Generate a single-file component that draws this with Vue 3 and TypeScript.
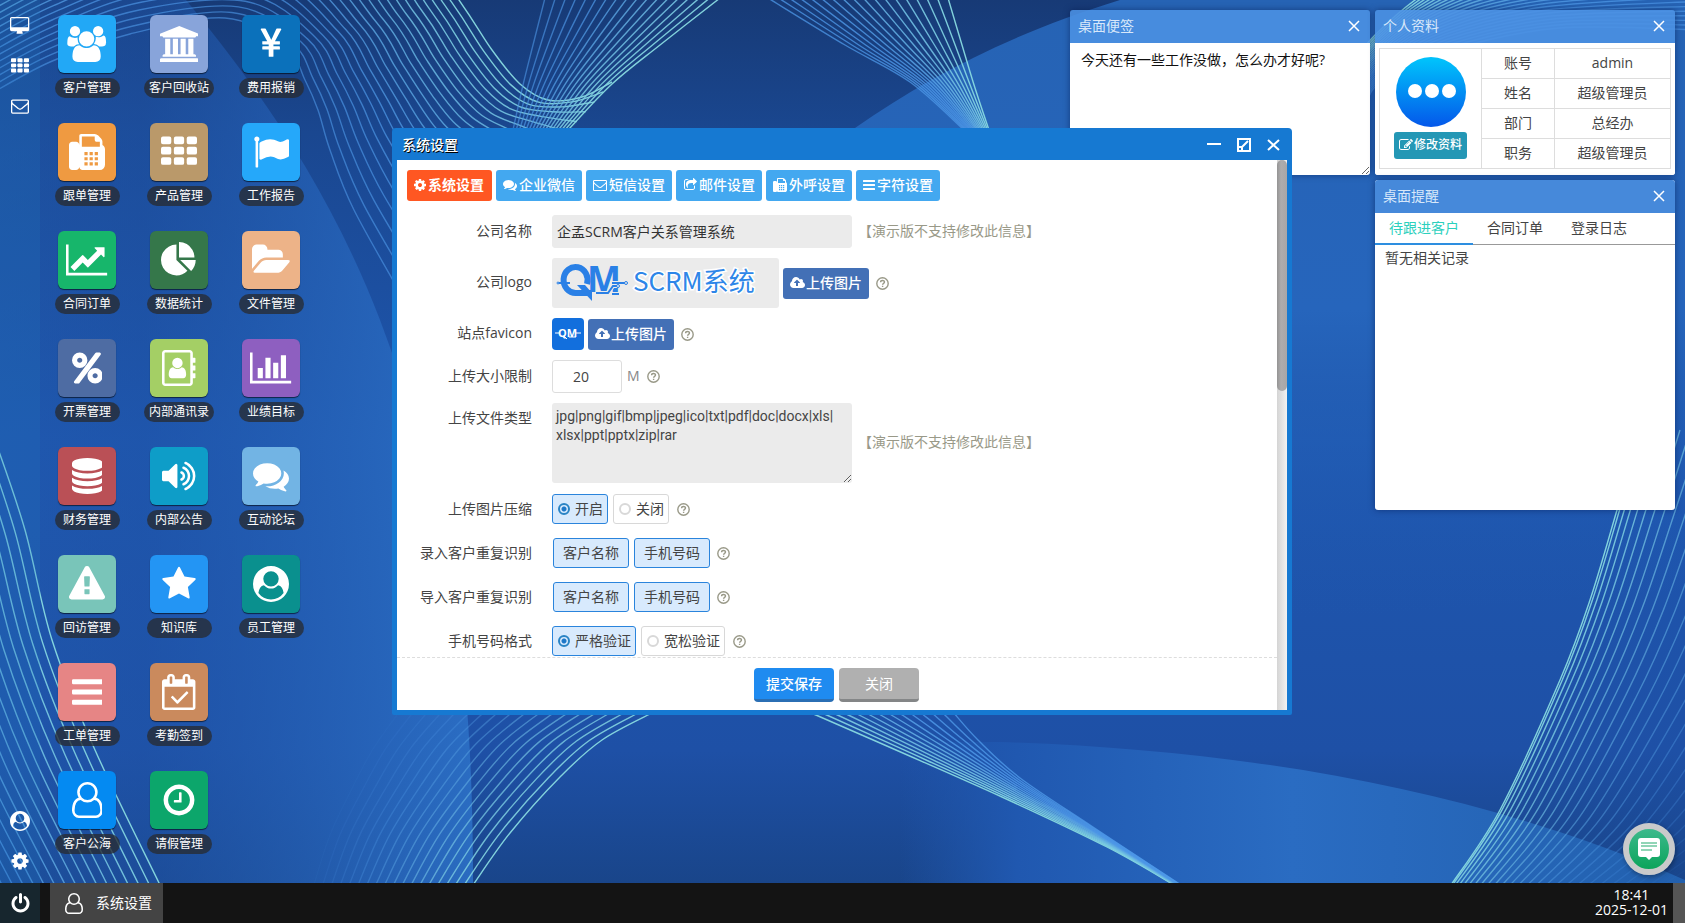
<script setup lang="ts">
import { ref } from 'vue'

type Pt = [number, number]
interface Glyph { w: number; d: string }
interface Line { d: string; stroke: string; opacity: number }

const faxKeys: string = [768, 1024, 1280]
  .flatMap((x) => [896, 1152, 1408].map((y) => `M${x} ${y}h160v160h-160z`))
  .join('')

const thCells: string = [0, 640, 1280]
  .flatMap((x) => [128, 640, 1152].map((y) =>
    `M${x + 96} ${y}h320q96 0 96 96v192q0 96-96 96h-320q-96 0-96-96v-192q0-96 96-96z`))
  .join('')

const glyphs: Record<string, Glyph> = {
  users: { w: 2048, d: 'M657 896q-162 5-265 128h-134q-82 0-138-40.5t-56-118.5q0-353 124-353 6 0 43.5 21t97.5 42.5 119 21.5q67 0 133-23-5 37-5 66 0 159 93 290zm1071 637q0 120-73 189.5t-194 69.5h-874q-121 0-194-69.5t-73-189.5q0-53 3.5-103.5t14-109 26.5-108.5 43-97.5 62-81 85.5-53.5 111.5-20q10 0 43 21.5t73 48 107 48 135 21.5 135-21.5 107-48 73-48 43-21.5q61 0 111.5 20t85.5 53.5 62 81 43 97.5 26.5 108.5 14 109 3.5 103.5zm-1024-1277q0 106-75 181t-181 75-181-75-75-181 75-181 181-75 181 75 75 181zm704 384q0 159-112.5 271.5t-271.5 112.5-271.5-112.5-112.5-271.5 112.5-271.5 271.5-112.5 271.5 112.5 112.5 271.5zm576 225q0 78-56 118.5t-138 40.5h-134q-103-123-265-128 93-131 93-290 0-29-5-66 66 23 133 23 59 0 119-21.5t97.5-42.5 43.5-21q124 0 124 353zm-128-609q0 106-75 181t-181 75-181-75-75-181 75-181 181-75 181 75 75 181z' },
  bank: { w: 1920, d: 'M960 0l960 384v128h-128q0 26-20.5 45t-48.5 19h-1526q-28 0-48.5-19t-20.5-45h-128v-128zm-704 640h256v768h128v-768h256v768h128v-768h256v768h128v-768h256v768h59q28 0 48.5 19t20.5 45v64h-1664v-64q0-26 20.5-45t48.5-19h59v-768zm1595 960q28 0 48.5 19t20.5 45v128h-1920v-128q0-26 20.5-45t48.5-19h1782z' },
  yen: { w: 1792, d: 'M985.5 1536h-172q-13 0-22.5-9t-9.5-23v-330h-288q-13 0-22.5-9t-9.5-23v-103q0-13 9.5-22.5t22.5-9.5h288v-85h-288q-13 0-22.5-9t-9.5-23v-104q0-13 9.5-22.5t22.5-9.5h214l-321-578q-8-16 0-32 10-16 28-16h194q19 0 29 18l215 425q19 38 56 125 10-24 30.5-68t27.5-61l191-420q8-19 29-19h191q17 0 27 16 9 14 1 31l-313 579h215q13 0 22.5 9.5t9.5 22.5v104q0 14-9.5 23t-22.5 9h-290v85h290q13 0 22.5 9.5t9.5 22.5v103q0 14-9.5 23t-22.5 9h-290v330q0 13-9.5 22.5t-22.5 9.5z' },
  fax: { w: 1792, d: 'M352 384q66 0 113 47t47 113v1088q0 66-47 113t-113 47h-192q-66 0-113-47t-47-113v-1088q0-66 47-113t113-47h192zM1664 547q58 34 93 93t35 128v768q0 106-75 181t-181 75h-864q-66 0-113-47t-47-113v-1536q0-40 28-68t68-28h672q40 0 88 20t76 48l152 152q28 28 48 76t20 88zM1536 640v-256h-160q-40 0-68-28t-28-68v-160h-640v512z' + faxKeys },
  th: { w: 1792, d: thCells },
  flag: { w: 1792, d: 'M320 256q0 72-64 110v1266q0 13-9.5 22.5t-22.5 9.5h-64q-13 0-22.5-9.5t-9.5-22.5v-1266q-64-38-64-110 0-53 37.5-90.5t90.5-37.5 90.5 37.5 37.5 90.5zm1472 64v763q0 25-12.5 38.5t-39.5 27.5q-215 116-369 116-61 0-123.5-22t-108.5-48-115.5-48-142.5-22q-192 0-464 146-17 9-33 9-26 0-45-19t-19-45v-742q0-32 31-55 21-14 79-43 236-120 421-120 107 0 200 29t219 88q38 19 88 19 54 0 117.5-21t110-47 88-47 54.5-21q26 0 45 19t19 45z' },
  line: { w: 2048, d: 'M2048 1536v128h-2048v-1536h128v1408h1920zm-128-1248v435q0 21-19.5 29.5t-35.5-7.5l-121-121-633 633q-10 10-23 10t-23-10l-233-233-416 416-192-192 585-585q10-10 23-10t23 10l233 233 464-464-121-121q-16-16-7.5-35.5t29.5-19.5h435q14 0 23 9t9 23z' },
  pie: { w: 1792, d: 'M768 890l546 546q-106 108-247.5 168t-298.5 60q-209 0-385.5-103t-279.5-279.5-103-385.5 103-385.5 279.5-279.5 385.5-103v762zm187 6h773q0 157-60 298.5t-168 247.5zm709-128h-768v-768q209 0 385.5 103t279.5 279.5 103 385.5z' },
  folder: { w: 1920, d: 'M1879 952q0 31-31 66l-336 396q-43 51-120.5 86.5t-143.5 35.5h-1088q-34 0-60.5-13t-26.5-43q0-31 31-66l336-396q43-51 120.5-86.5t143.5-35.5h1088q34 0 60.5 13t26.5 43zm-343-344v160h-832q-94 0-197 47.5t-164 119.5l-337 396-5 6q0-4-.5-12.5t-.5-12.5v-960q0-92 66-158t158-66h320q92 0 158 66t66 158v32h544q92 0 158 66t66 158z' },
  percent: { w: 1536, d: 'M1280 1280q0-52-38-90t-90-38-90 38-38 90 38 90 90 38 90-38 38-90zM512 512q0-52-38-90t-90-38-90 38-38 90 38 90 90 38 90-38 38-90zM1536 1280q0 159-112.5 271.5t-271.5 112.5-271.5-112.5-112.5-271.5 112.5-271.5 271.5-112.5 271.5 112.5 112.5 271.5zM1440 192q0 20-13 38l-1056 1408q-19 26-51 26h-160q-26 0-45-19t-19-45q0-20 13-38l1056-1408q19-26 51-26h160q26 0 45 19t19 45zM768 512q0 159-112.5 271.5t-271.5 112.5-271.5-112.5-112.5-271.5 112.5-271.5 271.5-112.5 271.5 112.5 112.5 271.5z' },
  book: { w: 1664, d: 'M1028 644q0 107-76.5 183t-183.5 76-183.5-76-76.5-183 76.5-183 183.5-76 183.5 76 76.5 183zm-48 220q46 0 82.5 17t60 47.5 39.5 67 24 81 11.5 82.5 3.5 79q0 67-39.5 118.5t-105.5 51.5h-576q-66 0-105.5-51.5t-39.5-118.5q0-48 4.5-93.5t18.5-98.5 36.5-91.5 63-64.5 93.5-26h5q7 4 32 19.5t35.5 21 33 17 37 16 35 9 39.5 4.5 39.5-4.5 35-9 37-16 33-17 35.5-21 32-19.5zM1664 608q0 13-9.5 22.5t-22.5 9.5h-96v128h96q13 0 22.5 9.5t9.5 22.5v192q0 13-9.5 22.5t-22.5 9.5h-96v128h96q13 0 22.5 9.5t9.5 22.5v192q0 13-9.5 22.5t-22.5 9.5h-96v224q0 66-47 113t-113 47h-1216q-66 0-113-47t-47-113v-1472q0-66 47-113t113-47h1216q66 0 113 47t47 113v224h96q13 0 22.5 9.5t9.5 22.5v192zM1408 1632v-1472q0-13-9.5-22.5t-22.5-9.5h-1216q-13 0-22.5 9.5t-9.5 22.5v1472q0 13 9.5 22.5t22.5 9.5h1216q13 0 22.5-9.5t9.5-22.5z' },
  bar: { w: 2048, d: 'M640 896v512h-256v-512h256zm384-512v1024h-256v-1024h256zm1024 1152v128h-2048v-1536h128v1408h1920zm-640-896v768h-256v-768h256zm384-384v1152h-256v-1152h256z' },
  db: { w: 1536, d: 'M768 768q237 0 443-43t325-127v170q0 69-103 128t-280 93.5-385 34.5-385-34.5-280-93.5-103-128v-170q119 84 325 127t443 43zm0 768q237 0 443-43t325-127v170q0 69-103 128t-280 93.5-385 34.5-385-34.5-280-93.5-103-128v-170q119 84 325 127t443 43zm0-384q237 0 443-43t325-127v170q0 69-103 128t-280 93.5-385 34.5-385-34.5-280-93.5-103-128v-170q119 84 325 127t443 43zm0-1152q208 0 385 34.5t280 93.5 103 128v128q0 69-103 128t-280 93.5-385 34.5-385-34.5-280-93.5-103-128v-128q0-69 103-128t280-93.5 385-34.5z' },
  volume: { w: 1664, d: 'M768 352v1088q0 26-19 45t-45 19-45-19l-333-333h-262q-26 0-45-19t-19-45v-384q0-26 19-45t45-19h262l333-333q19-19 45-19t45 19 19 45zm384 544q0 76-42.5 141.5t-112.5 93.5q-10 5-25 5-26 0-45-18.5t-19-45.5q0-21 12-35.5t29-25 34-23 29-36 12-56.5-12-56.5-29-36-34-23-29-25-12-35.5q0-27 19-45.5t45-18.5q15 0 25 5 70 27 112.5 93t42.5 142zm256 0q0 153-85 282.5t-225 188.5q-13 5-25 5-27 0-46-19t-19-45q0-39 39-59 56-29 76-44 74-54 115.5-135.5t41.5-173.5-41.5-173.5-115.5-135.5q-20-15-76-44-39-20-39-59 0-26 19-45t45-19q13 0 26 5 140 59 225 188.5t85 282.5zm256 0q0 230-127 422.5t-338 283.5q-13 5-26 5-26 0-45-19t-19-45q0-36 39-59 7-4 22.5-10.5t22.5-10.5q46-25 82-51 123-91 192-227t69-289-69-289-192-227q-36-26-82-51-7-4-22.5-10.5t-22.5-10.5q-39-23-39-59 0-26 19-45t45-19q13 0 26 5 211 91 338 283.5t127 422.5z' },
  comments: { w: 1792, d: 'M1408 768q0 139-94 257t-256.5 186.5-353.5 68.5q-86 0-176-16-124 88-278 128-36 9-86 16h-3q-11 0-20.5-8t-11.5-21q-1-3-1-6.5t.5-6.5 2-6l2.5-5 3.5-5.5 4-5 4.5-5 4-4.5q5-6 23-25t26-29.5 22.5-29 25-38.5 20.5-44q-124-72-195-177t-71-224q0-139 94-257t256.5-186.5 353.5-68.5 353.5 68.5 256.5 186.5 94 257zm384 256q0 120-71 224.5t-195 176.5q10 24 20.5 44t25 38.5 22.5 29 26 29.5 23 25q1 1 4 4.5t4.5 5 4 5 3.5 5.5l2.5 5 2 6 .5 6.5-1 6.5q-3 14-13 22t-22 7q-50-7-86-16-154-40-278-128-90 16-176 16-271 0-472-132 58 4 88 4 161 0 309-45t264-129q125-92 192-212t67-254q0-77-23-152 129 71 204 178t75 230z' },
  warning: { w: 1792, d: 'M1024 1375v-190q0-14-9.5-23.5t-22.5-9.5h-192q-13 0-22.5 9.5t-9.5 23.5v190q0 14 9.5 23.5t22.5 9.5h192q13 0 22.5-9.5t9.5-23.5zm-2-374l18-459q0-12-10-19-13-11-24-11h-220q-11 0-24 11-10 7-10 21l17 457q0 10 10 16.5t24 6.5h185q14 0 23.5-6.5t10.5-16.5zm-14-934l768 1408q35 63-2 126-17 29-46.5 46t-63.5 17h-1536q-34 0-63.5-17t-46.5-46q-37-63-2-126l768-1408q17-31 47-49t65-18 65 18 47 49z' },
  star: { w: 1792, d: 'M1728 647q0 22-26 48l-363 354 86 500q1 7 1 20 0 21-10.5 35.5t-30.5 14.5q-19 0-40-12l-449-236-449 236q-22 12-40 12-21 0-31.5-14.5t-10.5-35.5q0-6 2-20l86-500-364-354q-25-27-25-48 0-37 56-46l502-73 225-455q19-41 49-41t49 41l225 455 502 73q56 9 56 46z' },
  userCircle: { w: 1792, d: 'M1523 1339q-22-155-87.5-257.5t-184.5-118.5q-67 74-159.5 115.5t-195.5 41.5-195.5-41.5-159.5-115.5q-119 16-184.5 118.5t-87.5 257.5q106 150 271 237.5t356 87.5 356-87.5 271-237.5zm-243-699q0-159-112.5-271.5t-271.5-112.5-271.5 112.5-112.5 271.5 112.5 271.5 271.5 112.5 271.5-112.5 112.5-271.5zm512 256q0 182-71 347.5t-190.5 286-285.5 191.5-349 71q-182 0-348-71t-286-191-191-286-71-348 71-348 191-286 286-191 348-71 348 71 286 191 191 286 71 348z' },
  bars: { w: 1536, d: 'M64 256h1408q64 0 64 64v128q0 64-64 64h-1408q-64 0-64-64v-128q0-64 64-64zM64 768h1408q64 0 64 64v128q0 64-64 64h-1408q-64 0-64-64v-128q0-64 64-64zM64 1280h1408q64 0 64 64v128q0 64-64 64h-1408q-64 0-64-64v-128q0-64 64-64z' },
  calendar: { w: 1664, d: 'M1303 964l-512 512q-10 9-23 9t-23-9l-288-288q-9-10-9-23t9-22l46-46q9-9 22-9t23 9l220 220 444-444q10-9 23-9t22 9l46 46q9 9 9 22t-9 23zm-1175 700h1408v-1024h-1408v1024zm384-1216v-288q0-14-9-23t-23-9h-64q-14 0-23 9t-9 23v288q0 14 9 23t23 9h64q14 0 23-9t9-23zm768 0v-288q0-14-9-23t-23-9h-64q-14 0-23 9t-9 23v288q0 14 9 23t23 9h64q14 0 23-9t9-23zm384-64v1280q0 52-38 90t-90 38h-1408q-52 0-90-38t-38-90v-1280q0-52 38-90t90-38h128v-96q0-66 47-113t113-47h64q66 0 113 47t47 113v96h384v-96q0-66 47-113t113-47h64q66 0 113 47t47 113v96h128q52 0 90 38t38 90z' },
  user: { w: 1536, d: 'M1201 784q47 14 89.5 38t89 73 79.5 115.5 55 172 22 236.5q0 154-100 263.5t-241 109.5h-854q-141 0-241-109.5t-100-263.5q0-131 22-236.5t55-172 79.5-115.5 89-73 89.5-38q-79-125-79-272 0-104 40.5-198.5t109.5-163.5 163.5-109.5 198.5-40.5 198.5 40.5 163.5 109.5 109.5 163.5 40.5 198.5q0 147-79 272zm-433-656q-159 0-271.5 112.5t-112.5 271.5 112.5 271.5 271.5 112.5 271.5-112.5 112.5-271.5-112.5-271.5-271.5-112.5zm427 1536q88 0 150.5-71.5t62.5-173.5q0-239-78.5-377t-225.5-145q-145 127-336 127t-336-127q-147 7-225.5 145t-78.5 377q0 102 62.5 173.5t150.5 71.5h854z' },
  clock: { w: 1792, d: 'M1024 544v448q0 14-9 23t-23 9h-320q-14 0-23-9t-9-23v-64q0-14 9-23t23-9h224v-352q0-14 9-23t23-9h64q14 0 23 9t9 23zm416 352q0-148-73-273t-198-198-273-73-273 73-198 198-73 273 73 273 198 198 273 73 273-73 198-198 73-273zm224 0q0 209-103 385.5t-279.5 279.5-385.5 103-385.5-103-279.5-279.5-103-385.5 103-385.5 279.5-279.5 385.5-103 385.5 103 279.5 279.5 103 385.5z' },
  cog: { w: 1792, d: 'M1152 896q0-106-75-181t-181-75-181 75-75 181 75 181 181 75 181-75 75-181zm512-109v222q0 12-8 23t-20 13l-185 28q-19 54-39 91 35 50 107 138 10 12 10 25t-9 23q-27 37-99 108t-94 71q-12 0-26-9l-138-108q-44 23-91 38-16 136-29 186-7 28-36 28h-222q-14 0-24.5-8.5t-11.5-21.5l-28-184q-49-16-90-37l-141 107q-10 9-25 9-14 0-25-11-126-114-165-168-7-10-7-23 0-12 8-23 15-21 51-66.5t54-70.5q-27-50-41-99l-183-27q-13-2-21-12.5t-8-23.5v-222q0-12 8-23t19-13l186-28q14-46 39-92-40-57-107-138-10-12-10-24 0-10 9-23 26-36 98.5-107.5t94.5-71.5q13 0 26 10l138 107q44-23 91-38 16-136 29-186 7-28 36-28h222q14 0 24.5 8.5t11.5 21.5l28 184q49 16 90 37l142-107q9-9 24-9 13 0 25 10 129 119 165 170 7 8 7 22 0 12-8 23-15 21-51 66.5t-54 70.5q26 50 41 98l183 28q13 2 21 12.5t8 23.5z' },
  power: { w: 1792, d: 'M1664 896q0 156-61 298t-164 245-245 164-298 61-298-61-245-164-164-245-61-298q0-182 80.5-343t226.5-270q43-32 95.5-25t83.5 50q32 42 24.5 94.5t-49.5 84.5q-98 74-151.5 181t-53.5 228q0 104 40.5 198.5t109.5 163.5 163.5 109.5 198.5 40.5 198.5-40.5 163.5-109.5 109.5-163.5 40.5-198.5q0-121-53.5-228t-151.5-181q-42-32-49.5-84.5t24.5-94.5q31-43 84-50t95 25q146 109 226.5 270t80.5 343zm-640-768v640q0 52-38 90t-90 38-90-38-38-90v-640q0-52 38-90t90-38 90 38 38 90z' },
  mail: { w: 1792, d: 'M1664 1504v-768q-32 36-69 66-268 206-426 338-51 43-83 67t-86.5 48.5-102.5 24.5h-2q-48 0-102.5-24.5t-86.5-48.5-83-67q-158-132-426-338-37-30-69-66v768q0 13 9.5 22.5t22.5 9.5h1472q13 0 22.5-9.5t9.5-22.5zm0-1051v-24.5l-.5-13-3-12.5-5.5-9-9-7.5-14-2.5h-1472q-13 0-22.5 9.5t-9.5 22.5q0 168 147 284 193 152 401 317 6 5 35 29.5t46 37.5 44.5 31.5 50.5 27.5 43 9h2q20 0 43-9t50.5-27.5 44.5-31.5 46-37.5 35-29.5q208-165 401-317 54-43 100.5-115.5t46.5-131.5zm128-37v1088q0 66-47 113t-113 47h-1472q-66 0-113-47t-47-113v-1088q0-66 47-113t113-47h1472q66 0 113 47t47 113z' },
  desktop: { w: 1920, d: 'M1792 992v-832q0-13-9.5-22.5t-22.5-9.5h-1600q-13 0-22.5 9.5t-9.5 22.5v832q0 13 9.5 22.5t22.5 9.5h1600q13 0 22.5-9.5t9.5-22.5zm128-832v1088q0 66-47 113t-113 47h-544q0 37 16 77.5t32 71 16 43.5q0 26-19 45t-45 19h-512q-26 0-45-19t-19-45q0-14 16-44t32-70 16-78h-544q-66 0-113-47t-47-113v-1088q0-66 47-113t113-47h1600q66 0 113 47t47 113z' },
  share: { w: 1792, d: 'M1536 989v259q0 119-84.5 203.5t-203.5 84.5h-832q-119 0-203.5-84.5t-84.5-203.5v-832q0-119 84.5-203.5t203.5-84.5h255q13 0 22.5 9.5t9.5 22.5q0 27-26 32-77 26-133 60-10 4-16 4h-112q-66 0-113 47t-47 113v832q0 66 47 113t113 47h832q66 0 113-47t47-113v-214q0-19 18-29 28-13 54-37 16-16 35-8 21 9 21 29zm237-496l-384 384q-18 19-45 19-12 0-25-5-39-17-39-59v-192h-160q-323 0-438 131-119 137-74 473 3 23-20 34-8 2-12 2-16 0-26-13-10-14-21-31t-39.5-68.5-49.5-99.5-38.5-114-17.5-122q0-49 3.5-91t14-90 28-88 47-81.5 68.5-74 94.5-61.5 124.5-48.5 159.5-30.5 196.5-11h160v-192q0-42 39-59 13-5 25-5 26 0 45 19l384 384q19 19 19 45t-19 45z' },
  upload: { w: 1920, d: 'M1280 864q0-14-9-23l-352-352q-9-9-23-9t-23 9l-351 351q-10 12-10 24 0 14 9 23t23 9h224v352q0 13 9.5 22.5t22.5 9.5h192q13 0 22.5-9.5t9.5-22.5v-352h224q13 0 22.5-9.5t9.5-22.5zm640 288q0 159-112.5 271.5t-271.5 112.5h-1088q-185 0-316.5-131.5t-131.5-316.5q0-130 70-240t188-165q-2-30-2-43 0-212 150-362t362-150q156 0 285.5 87t188.5 231q71-62 166-62 106 0 181 75t75 181q0 76-41 138 130 31 213.5 135.5t83.5 238.5z' },
  edit: { w: 1792, d: 'M888 1184l116-116-152-152-116 116v56h96v96h56zm440-720q-16-16-33 1l-350 350q-17 17-1 33t33-1l350-350q17-17 1-33zm80 594v190q0 119-84.5 203.5t-203.5 84.5h-832q-119 0-203.5-84.5t-84.5-203.5v-832q0-119 84.5-203.5t203.5-84.5h832q63 0 117 25 15 7 18 23 3 17-9 29l-49 49q-14 14-32 8-23-6-45-6h-832q-66 0-113 47t-47 113v832q0 66 47 113t113 47h832q66 0 113-47t47-113v-126q0-13 9-22l64-64q15-15 35-7t20 29zm-96-738l288 288-672 672h-288v-288zm444 132l-92 92-288-288 92-92q28-28 68-28t68 28l152 152q28 28 28 68t-28 68z' },
}

const evenOdd = new Set(['fax', 'book', 'desktop'])

interface App { name: string; icon: string; color: string }
const apps: App[] = [
  { name: '客户管理', icon: 'users', color: '#22a8f6' },
  { name: '跟单管理', icon: 'fax', color: '#ef9a41' },
  { name: '合同订单', icon: 'line', color: '#17b66b' },
  { name: '开票管理', icon: 'percent', color: '#4e6ca3' },
  { name: '财务管理', icon: 'db', color: '#ba5056' },
  { name: '回访管理', icon: 'warning', color: '#79c5b9' },
  { name: '工单管理', icon: 'bars', color: '#e68585' },
  { name: '客户公海', icon: 'user', color: '#048af2' },
  { name: '客户回收站', icon: 'bank', color: '#88a4da' },
  { name: '产品管理', icon: 'th', color: '#ba996a' },
  { name: '数据统计', icon: 'pie', color: '#35774a' },
  { name: '内部通讯录', icon: 'book', color: '#a4cf65' },
  { name: '内部公告', icon: 'volume', color: '#0e9dc8' },
  { name: '知识库', icon: 'star', color: '#2395f4' },
  { name: '考勤签到', icon: 'calendar', color: '#ca8a5d' },
  { name: '请假管理', icon: 'clock', color: '#0ca66b' },
  { name: '费用报销', icon: 'yen', color: '#0b71bb' },
  { name: '工作报告', icon: 'flag', color: '#25a8fa' },
  { name: '文件管理', icon: 'folder', color: '#edb388' },
  { name: '业绩目标', icon: 'bar', color: '#8e5fc0' },
  { name: '互动论坛', icon: 'comments', color: '#72b4e4' },
  { name: '员工管理', icon: 'userCircle', color: '#0a908e' },
]

const tabs = [
  { name: '系统设置', icon: 'cog' },
  { name: '企业微信', icon: 'comments' },
  { name: '短信设置', icon: 'mail' },
  { name: '邮件设置', icon: 'share' },
  { name: '外呼设置', icon: 'fax' },
  { name: '字符设置', icon: 'bars' },
]
const activeTab = ref('系统设置')

const profile = [
  ['账号', 'admin'],
  ['姓名', '超级管理员'],
  ['部门', '总经办'],
  ['职务', '超级管理员'],
]
const reminders = ['待跟进客户', '合同订单', '登录日志']
const activeReminder = ref('待跟进客户')

const company = ref('企孟SCRM客户关系管理系统')
const maxSize = ref('20')
const fileTypes = ref('jpg|png|gif|bmp|jpeg|ico|txt|pdf|doc|docx|xls|xlsx|ppt|pptx|zip|rar')
const compress = ref('开启')
const phoneFormat = ref('严格验证')
const inputCheck = ref(['客户名称', '手机号码'])
const importCheck = ref(['客户名称', '手机号码'])
const memo = ref('今天还有一些工作没做，怎么办才好呢?')

function smooth(p: Pt[]): string {
  let d = `M${p[0][0]} ${p[0][1]}`
  for (let i = 0; i < p.length - 1; i++) {
    const a = p[Math.max(i - 1, 0)]
    const b = p[i]
    const c = p[i + 1]
    const e = p[Math.min(i + 2, p.length - 1)]
    d += `C${b[0] + (c[0] - a[0]) / 6} ${b[1] + (c[1] - a[1]) / 6} ${c[0] - (e[0] - b[0]) / 6} ${c[1] - (e[1] - b[1]) / 6} ${c[0]} ${c[1]}`
  }
  return d
}

/* Blends one curve into another: the teal edge first, the blue edge last. */
function ribbon(teal: Pt[], blue: Pt[], count: number, fade = 0.6, ease = 1): Line[] {
  return Array.from({ length: count }, (_, i) => {
    const k = i / (count - 1)
    const t = Math.pow(k, ease)
    const pts = teal.map((p, j): Pt => [p[0] + (blue[j][0] - p[0]) * t, p[1] + (blue[j][1] - p[1]) * t])
    const mix = (a: number, b: number) => Math.round(a + (b - a) * Math.min(1, k * 1.4))
    return { d: smooth(pts), stroke: `rgb(${mix(136, 78)},${mix(218, 152)},${mix(224, 232)})`, opacity: 0.95 + (fade - 0.95) * k }
  })
}

const lines: Line[] = [
  ...ribbon(
    [[-20, -60], [60, -100], [200, -150], [380, -110], [459, 0], [492, 50], [520, 84], [548, 100], [582, 97], [612, 82]],
    [[-20, 100], [50, 62], [130, 34], [225, 18], [285, 45], [305, 80], [318, 110], [330, 150], [354, 210], [410, 310]], 24),
  ...ribbon([[720, -2], [660, 45], [612, 84], [568, 130]], [[545, -2], [533, 45], [523, 85], [513, 130]], 18),
  ...ribbon([[948, -2], [962, 45], [975, 88], [989, 130]], [[768, -2], [845, 45], [910, 82], [964, 130]], 18, 0.75),
  ...ribbon(
    [[1300, 140], [1340, 80], [1375, 35], [1430, -10], [1500, -40], [1700, -80]],
    [[1360, 140], [1366, 104], [1384, 80], [1450, 50], [1560, 28], [1700, 30]], 24),
  ...ribbon(
    [[-5, 440], [25, 530], [52, 640], [95, 750], [160, 885]],
    [[-180, 500], [-160, 580], [-130, 680], [-95, 780], [-40, 885]], 20),
  ...ribbon(
    [[654, 712], [602, 740], [560, 777], [510, 833], [473, 885]],
    [[385, 712], [360, 750], [340, 790], [320, 835], [305, 885]], 20, 0),
  ...ribbon(
    [[809, 712], [896, 750], [1002, 797], [1107, 847], [1174, 885]],
    [[953, 712], [978, 740], [1020, 778], [1093, 827], [1181, 885]], 14, 0.8),
  ...ribbon(
    [[1640, 430], [1617, 510], [1590, 600], [1560, 680], [1500, 810], [1451, 885]],
    [[1980, 430], [1930, 540], [1880, 640], [1820, 740], [1740, 830], [1640, 900]], 26, 0.05, 1.5),
]
</script>

<template>
  <div class="screen">
    <main class="desktop">
      <svg class="wallpaper" viewBox="0 0 1685 883" preserveAspectRatio="none" aria-hidden="true">
        <defs>
          <linearGradient id="sky" x1="0" y1="0" x2="0" y2="1">
            <stop offset="0" stop-color="#173a76" />
            <stop offset="0.15" stop-color="#1a4790" />
            <stop offset="0.5" stop-color="#1e57b0" />
            <stop offset="0.85" stop-color="#1e50a6" />
            <stop offset="1" stop-color="#19458a" />
          </linearGradient>
          <linearGradient id="leftLight" x1="0" y1="0" x2="1" y2="0">
            <stop offset="0" stop-color="#2058ac" stop-opacity="0.5" />
            <stop offset="0.3" stop-color="#1f54a8" stop-opacity="0.5" />
            <stop offset="1" stop-color="#2c70c6" stop-opacity="0.9" />
          </linearGradient>
          <linearGradient id="rightLight" x1="0" y1="0" x2="0" y2="1">
            <stop offset="0" stop-color="#2663b4" />
            <stop offset="0.5" stop-color="#2665bc" />
            <stop offset="1" stop-color="#1f57ae" stop-opacity="0" />
          </linearGradient>
          <linearGradient id="hill" x1="0" y1="0" x2="1" y2="0">
            <stop offset="0" stop-color="#2058b0" stop-opacity="0" />
            <stop offset="0.15" stop-color="#2058b0" />
            <stop offset="0.5" stop-color="#2a6cc2" />
            <stop offset="1" stop-color="#2260ae" />
          </linearGradient>
        </defs>
        <rect width="1685" height="883" fill="url(#sky)" />
        <path d="M0 0H186C260 90 330 190 380 320C440 480 473 620 473 883H0z" fill="url(#leftLight)" />
        <path d="M1120 0C1010 34 930 76 855 128L700 420H1290V620L1685 590V0z" fill="url(#rightLight)" />
        <path d="M1000 742C1250 750 1480 790 1685 880V883H900L900 742z" fill="url(#hill)" />
        <path v-for="(l, i) in lines" :key="i" :d="l.d" fill="none" :stroke="l.stroke" stroke-width="1.4" :stroke-opacity="l.opacity" />
      </svg>

      <nav class="rail" aria-label="快捷栏">
        <div class="rail-group">
          <button v-for="n in ['desktop', 'th', 'mail']" :key="n" type="button" :aria-label="n">
            <svg class="g18" :viewBox="`0 0 ${glyphs[n].w} 1792`" :fill-rule="evenOdd.has(n) ? 'evenodd' : 'nonzero'"><path :d="glyphs[n].d" /></svg>
          </button>
        </div>
        <div class="rail-group">
          <button v-for="n in ['userCircle', 'cog']" :key="n" type="button" :aria-label="n">
            <svg class="g20" :viewBox="`0 0 ${glyphs[n].w} 1792`"><path :d="glyphs[n].d" /></svg>
          </button>
        </div>
      </nav>

      <section class="apps" aria-label="应用">
        <button v-for="a in apps" :key="a.name" class="app" type="button">
          <span class="tile" :style="{ backgroundColor: a.color }">
            <svg class="g36" :viewBox="`0 0 ${glyphs[a.icon].w} 1792`" :fill-rule="evenOdd.has(a.icon) ? 'evenodd' : 'nonzero'"><path :d="glyphs[a.icon].d" /></svg>
          </span>
          <span class="app-name">{{ a.name }}</span>
        </button>
      </section>

      <aside class="widgets">
        <section class="widget memo">
          <header><h2>桌面便签</h2><button type="button" aria-label="关闭便签"><svg viewBox="0 0 12 12"><path d="M1 1l10 10M11 1L1 11" /></svg></button></header>
          <textarea v-model="memo" aria-label="便签内容"></textarea>
        </section>
        <div class="stack">
          <section class="widget">
            <header><h2>个人资料</h2><button type="button" aria-label="关闭资料"><svg viewBox="0 0 12 12"><path d="M1 1l10 10M11 1L1 11" /></svg></button></header>
            <table class="profile">
              <tbody>
                <tr v-for="(r, i) in profile" :key="r[0]">
                  <td v-if="i === 0" rowspan="4" class="photo">
                    <svg class="avatar" viewBox="0 0 70 70" role="img" aria-label="头像">
                      <defs><linearGradient id="av" x1="0" y1="0" x2="0" y2="1"><stop offset="0.05" stop-color="#00c0fb" /><stop offset="1" stop-color="#0457ea" /></linearGradient></defs>
                      <circle cx="35" cy="35" r="35" fill="url(#av)" />
                      <g fill="#fff"><circle cx="19" cy="34" r="7" /><circle cx="36" cy="34" r="7" /><circle cx="53" cy="34" r="7" /></g>
                    </svg>
                    <button type="button" class="edit"><svg viewBox="0 0 1792 1792"><path :d="glyphs.edit.d" /></svg>修改资料</button>
                  </td>
                  <th scope="row">{{ r[0] }}</th>
                  <td>{{ r[1] }}</td>
                </tr>
              </tbody>
            </table>
          </section>
          <section class="widget remind">
            <header><h2>桌面提醒</h2><button type="button" aria-label="关闭提醒"><svg viewBox="0 0 12 12"><path d="M1 1l10 10M11 1L1 11" /></svg></button></header>
            <div class="remind-tabs">
              <button v-for="r in reminders" :key="r" type="button" :class="{ on: r === activeReminder }" @click="activeReminder = r">{{ r }}</button>
            </div>
            <p>暂无相关记录</p>
          </section>
        </div>
      </aside>

      <section class="window" aria-label="系统设置">
        <header class="titlebar">
          <h1>系统设置</h1>
          <div class="controls">
            <button type="button" aria-label="最小化"><svg viewBox="0 0 14 14"><path d="M0 6h14" stroke-width="2" /></svg></button>
            <button type="button" aria-label="最大化"><svg viewBox="0 0 14 14"><path d="M1 1h12v12H1zM5 9l6-6M1 9h4v4" stroke-width="2" /></svg></button>
            <button type="button" aria-label="关闭窗口"><svg viewBox="0 0 14 14"><path d="M1 2l11 10M12 2L1 12" stroke-width="2" /></svg></button>
          </div>
        </header>
        <div class="window-body">
          <form class="settings" @submit.prevent>
            <div class="tabs">
              <button v-for="t in tabs" :key="t.name" type="button" :class="{ on: t.name === activeTab }" @click="activeTab = t.name">
                <svg :class="{ narrow: t.icon === 'cog' || t.icon === 'bars' }" :viewBox="t.icon === 'cog' ? '128 0 1536 1792' : `0 0 ${glyphs[t.icon].w} 1792`" :fill-rule="evenOdd.has(t.icon) ? 'evenodd' : 'nonzero'"><path :d="glyphs[t.icon].d" /></svg>{{ t.name }}
              </button>
            </div>

            <div class="row">
              <label class="cap" for="company">公司名称</label>
              <div class="field"><input id="company" v-model="company" class="text wide" type="text" readonly /><span class="note">【演示版不支持修改此信息】</span></div>
            </div>
            <div class="row">
              <span class="cap">公司logo</span>
              <div class="field">
                <span class="logo-box">
                  <svg class="logo" viewBox="0 0 227 50" role="img" aria-label="QM SCRM系统">
                    <path d="M35 26A12 13 0 1 0 24 35h16" fill="none" stroke="#2a80e6" stroke-width="6" />
                    <path d="M25 27h8l7 8v8z" fill="#2a80e6" />
                    <text x="35" y="34" class="logo-m">M</text>
                    <path d="M58 25h15M44 35h12l5-7h4" fill="none" stroke="#ebebeb" stroke-width="4" />
                    <path d="M6 25h12M60 25h13M44 35h12l5-7h4M60 36h7" fill="none" stroke="#2a80e6" stroke-width="2" />
                    <g fill="#ebebeb" stroke="#2a80e6"><circle cx="6" cy="25" r="1" /><circle cx="66" cy="28" r="1.5" /><circle cx="74" cy="25" r="1.5" /></g>
                    <text x="81" y="33" class="logo-text">SCRM系统</text>
                  </svg>
                </span>
                <button type="button" class="upload"><svg viewBox="0 0 1920 1792"><path :d="glyphs.upload.d" /></svg>上传图片</button>
                <svg class="help" viewBox="0 0 13 13"><circle cx="6.5" cy="6.5" r="5.7" /><path d="M4.6 5.2C4.6 3 8.5 3 8.5 5.1C8.5 6.4 6.6 6.3 6.6 7.8M6.6 8.7V10" /></svg>
              </div>
            </div>
            <div class="row">
              <span class="cap">站点favicon</span>
              <div class="field">
                <svg class="favicon" viewBox="0 0 32 32" role="img" aria-label="QM">
                  <rect width="32" height="32" rx="4" fill="#126fdd" />
                  <text x="6" y="19" class="fav-text">QM</text>
                  <path d="M3 15h4M24 15h5M12 18l3 3M17 19h7" stroke="#fff" fill="none" />
                </svg>
                <button type="button" class="upload"><svg viewBox="0 0 1920 1792"><path :d="glyphs.upload.d" /></svg>上传图片</button>
                <svg class="help" viewBox="0 0 13 13"><circle cx="6.5" cy="6.5" r="5.7" /><path d="M4.6 5.2C4.6 3 8.5 3 8.5 5.1C8.5 6.4 6.6 6.3 6.6 7.8M6.6 8.7V10" /></svg>
              </div>
            </div>
            <div class="row">
              <label class="cap" for="size">上传大小限制</label>
              <div class="field">
                <input id="size" v-model="maxSize" class="text size" type="text" /><span class="unit">M</span>
                <svg class="help" viewBox="0 0 13 13"><circle cx="6.5" cy="6.5" r="5.7" /><path d="M4.6 5.2C4.6 3 8.5 3 8.5 5.1C8.5 6.4 6.6 6.3 6.6 7.8M6.6 8.7V10" /></svg>
              </div>
            </div>
            <div class="row top">
              <label class="cap" for="types">上传文件类型</label>
              <div class="field"><textarea id="types" v-model="fileTypes" class="types" readonly></textarea><span class="note">【演示版不支持修改此信息】</span></div>
            </div>
            <div class="choices">
              <div class="row choice">
                <span class="cap">上传图片压缩</span>
                <div class="field">
                  <label v-for="o in ['开启', '关闭']" :key="o" class="radio" :class="{ on: compress === o }"><input v-model="compress" type="radio" name="compress" :value="o" />{{ o }}</label>
                  <svg class="help" viewBox="0 0 13 13"><circle cx="6.5" cy="6.5" r="5.7" /><path d="M4.6 5.2C4.6 3 8.5 3 8.5 5.1C8.5 6.4 6.6 6.3 6.6 7.8M6.6 8.7V10" /></svg>
                </div>
              </div>
              <div class="row choice">
                <span class="cap">录入客户重复识别</span>
                <div class="field">
                  <label v-for="o in ['客户名称', '手机号码']" :key="o" class="check" :class="{ on: inputCheck.includes(o) }"><input v-model="inputCheck" type="checkbox" :value="o" />{{ o }}</label>
                  <svg class="help" viewBox="0 0 13 13"><circle cx="6.5" cy="6.5" r="5.7" /><path d="M4.6 5.2C4.6 3 8.5 3 8.5 5.1C8.5 6.4 6.6 6.3 6.6 7.8M6.6 8.7V10" /></svg>
                </div>
              </div>
              <div class="row choice">
                <span class="cap">导入客户重复识别</span>
                <div class="field">
                  <label v-for="o in ['客户名称', '手机号码']" :key="o" class="check" :class="{ on: importCheck.includes(o) }"><input v-model="importCheck" type="checkbox" :value="o" />{{ o }}</label>
                  <svg class="help" viewBox="0 0 13 13"><circle cx="6.5" cy="6.5" r="5.7" /><path d="M4.6 5.2C4.6 3 8.5 3 8.5 5.1C8.5 6.4 6.6 6.3 6.6 7.8M6.6 8.7V10" /></svg>
                </div>
              </div>
              <div class="row choice">
                <span class="cap">手机号码格式</span>
                <div class="field">
                  <label v-for="o in ['严格验证', '宽松验证']" :key="o" class="radio" :class="{ on: phoneFormat === o }"><input v-model="phoneFormat" type="radio" name="phone" :value="o" />{{ o }}</label>
                  <svg class="help" viewBox="0 0 13 13"><circle cx="6.5" cy="6.5" r="5.7" /><path d="M4.6 5.2C4.6 3 8.5 3 8.5 5.1C8.5 6.4 6.6 6.3 6.6 7.8M6.6 8.7V10" /></svg>
                </div>
              </div>
            </div>

            <footer class="actions">
              <button type="submit" class="save">提交保存</button>
              <button type="button" class="cancel">关闭</button>
            </footer>
          </form>
          <div class="scroll"><div class="thumb"></div></div>
        </div>
      </section>

      <button type="button" class="chat" aria-label="在线消息">
        <svg viewBox="0 0 22 22"><path d="M3 0h16q3 0 3 3v13q0 3-3 3h-5l-3 3-3-3h-5q-3 0-3-3v-13q0-3 3-3z" fill="#fff" /><path d="M3 5h16M3 8h16M3 12h11" stroke="#25ab6e" stroke-width="1" /></svg>
      </button>
    </main>

    <footer class="taskbar">
      <button type="button" class="power" aria-label="退出"><svg viewBox="0 0 1792 1792"><path :d="glyphs.power.d" /></svg></button>
      <button type="button" class="task"><svg viewBox="0 0 1536 1792"><path :d="glyphs.user.d" /></svg>系统设置</button>
      <time class="clock" datetime="2025-12-01T18:41">18:41<br />2025-12-01</time>
      <button type="button" class="peek" aria-label="显示桌面"></button>
    </footer>
  </div>
</template>

<style>
html, body { margin: 0; height: 100%; }
#app { height: 100%; }
</style>

<style scoped>
.screen { display: flex; flex-direction: column; height: 100vh; overflow: hidden; font: 14px/20px "Open Sans", "Noto Sans CJK SC", sans-serif; color: #444; }
.screen * { box-sizing: border-box; }
button, input, textarea { font: inherit; color: inherit; margin: 0; }
button { padding: 0; border: 0; background: none; cursor: pointer; }
h1, h2, p { margin: 0; font-size: 14px; font-weight: 400; }
svg { display: block; flex: none; fill: currentColor; }

.desktop { position: relative; flex: 1; min-height: 0; display: flex; overflow: hidden; }
.wallpaper { position: absolute; inset: 0; width: 100%; height: 100%; }
.rail { position: relative; width: 40px; display: flex; flex-direction: column; justify-content: space-between; padding: 6px 0 2px; background: rgba(32, 120, 190, .22); color: #fff; }
.rail-group { display: flex; flex-direction: column; }
.rail-group button { height: 40px; display: grid; place-items: center; }
.g18 { height: 18px; }
.g20 { height: 20px; }
.g36 { height: 36px; }

.apps { position: relative; align-self: flex-start; display: grid; grid-template-rows: repeat(8, 108px); grid-auto-flow: column; grid-auto-columns: 92px; padding: 15px 0 0 1px; }
.app { display: flex; flex-direction: column; align-items: center; justify-content: flex-start; gap: 5px; }
.tile { width: 58px; height: 58px; display: grid; place-items: center; border-radius: 6px; color: #fff; box-shadow: 0 1px 1px rgba(0, 0, 0, .6); }
.app-name { min-width: 65px; padding: 0 5px; border-radius: 10px; background: rgba(40, 44, 50, .78); color: #fff; font-size: 12px; line-height: 20px; text-align: center; }

.widgets { position: absolute; top: 10px; right: 10px; display: grid; grid-template-columns: 300px 300px; align-items: start; gap: 5px; }
.stack { display: grid; gap: 5px; }
.widget { border-radius: 3px; overflow: hidden; box-shadow: 0 0 6px rgba(0, 20, 70, .5); }
.widget header { display: flex; align-items: center; justify-content: space-between; height: 33px; padding: 0 10px 2px 8px; background: rgba(76, 146, 228, .88); color: #d8e8fa; }
.widget header button { color: #fff; }
.widget header svg { width: 12px; height: 12px; stroke: currentColor; stroke-width: 1.5; fill: none; }
.memo textarea { display: block; width: 100%; height: 132px; padding: 7px 11px; border: 0; background: #fff; color: #111; outline: none; resize: both; }
.profile { width: 100%; border: solid #fff; border-width: 5px 4px 6px; background: #fff; border-collapse: separate; border-spacing: 0; text-align: center; }
.profile td, .profile th { height: 30px; padding: 0 0 2px; border: solid #ddd; border-width: 0 1px 1px 0; font-weight: 400; }
.profile tr:first-child > * { border-top-width: 1px; height: 31px; }
.profile th { width: 73px; }
.profile .photo { width: 103px; border-left-width: 1px; }
.avatar { width: 70px; height: 70px; margin: 0 auto 5px; }
.edit { display: inline-flex; align-items: center; gap: 1px; height: 27px; padding: 0 5px; border-radius: 3px; background: #2497b5; color: #fff; font-size: 12px; font-weight: 500; }
.edit svg { width: 14px; height: 14px; }
.remind { min-height: 330px; background: #fff; }
.remind header { background: #4689da; }
.remind-tabs { display: flex; height: 32px; border-bottom: 1px solid #999; }
.remind-tabs button { height: 32px; padding: 0 14px 2px; }
.remind-tabs .on { padding-bottom: 0; color: #2cd0bd; border-bottom: 2px solid #2d8ee0; }
.remind p { padding: 3px 10px; }

.window { position: absolute; left: 392px; top: 128px; width: 900px; padding: 0 5px 5px; border-radius: 4px 4px 2px 2px; background: #1679d2; }
.titlebar { height: 32px; display: flex; align-items: center; justify-content: space-between; padding: 2px 6px 0 5px; color: #fff; }
.titlebar h1 { font-weight: 500; text-shadow: 1px 1px 0 #000; }
.controls { display: flex; gap: 16px; }
.controls svg { width: 14px; height: 14px; fill: none; stroke: currentColor; }
.window-body { display: flex; background: #fff; }
.settings { flex: 1; min-width: 0; display: flex; flex-direction: column; gap: 10px; padding-top: 10px; }
.tabs { display: flex; gap: 4px; padding: 0 10px 4px; }
.tabs button { display: flex; align-items: center; gap: 2px; height: 31px; padding: 0 7px 1px; border-radius: 3px; background: #43a8f0; color: #fff; font-weight: 500; }
.tabs .on { padding: 0 8px 1px 7px; background: #ff5722; font-weight: 700; }
.tabs svg { width: 14px; height: 14px; }
.tabs .narrow { width: 12px; }
.row { display: flex; align-items: center; gap: 20px; }
.cap { width: 135px; padding-bottom: 2px; text-align: right; color: #444; }
.row.top .cap { align-self: flex-start; padding-top: 5px; }
.choices { display: grid; gap: 14px; padding-top: 1px; }
.choice { align-items: flex-start; line-height: 30px; }
.choice .cap { padding: 0; line-height: 30px; }
.field { display: flex; align-items: center; }
.text { height: 33px; border: 1px solid #ddd; border-radius: 3px; background: #fff; outline: none; }
.wide { width: 300px; padding: 0 4px 2px; border-color: #ebebeb; background: #ebebeb; color: #333; }
.size { width: 70px; padding: 0 12px 1px 0; text-align: center; }
.note { padding: 0 0 2px 6px; color: #998; }
.unit { padding: 0 0 2px 5px; color: #888; }
.logo-box { width: 227px; height: 50px; border-radius: 3px; background: #ebebeb; }
.logo { width: 227px; height: 50px; overflow: visible; }
.logo-m { font: 700 36px "Open Sans", sans-serif; fill: #2a80e6; }
.logo-text { font: 26px "Noto Sans CJK SC", sans-serif; fill: #2e86e8; stroke: #fff; stroke-width: 3px; paint-order: stroke; }
.favicon { width: 32px; height: 32px; }
.fav-text { font: 700 11px "Open Sans", sans-serif; fill: #fff; }
.upload { display: flex; align-items: center; gap: 1px; height: 31px; margin-left: 4px; padding: 0 7px; border-radius: 3px; background: #4370b6; color: #fff; font-weight: 500; }
.upload svg { width: 15px; height: 14px; }
.help { width: 13px; height: 13px; margin-left: 7px; fill: none; stroke: #998; stroke-width: 1.4; color: #998; }
.types { width: 300px; height: 80px; padding: 4px 17px 4px 4px; border: 0; border-radius: 3px; background: #ebebeb; color: #444; font-family: Roboto, "Noto Sans CJK SC", sans-serif; line-height: 19px; outline: none; overflow: hidden; resize: both; }
.radio, .check { display: flex; align-items: center; height: 30px; margin-right: 5px; border: 1px solid #d8d8d8; border-radius: 3px; line-height: 28px; }
.radio { gap: 5px; padding: 0 4px 0 5px; }
.check { margin: 0 4px 0 1px; padding: 0 9px; }
.on.radio, .on.check { border-color: #2a84dc; background: #d8eafd; }
.radio input { appearance: none; width: 12px; height: 12px; margin: 0; border: 2px solid #d8d8d8; border-radius: 50%; background: #fff; }
.radio.on input { border-color: #2a84c4; background: radial-gradient(circle, #1e78c8 2px, #d8eafd 3px); }
.check input { appearance: none; width: 0; height: 0; margin: 0; }
.choice .help { margin-left: 3px; }
.actions { display: flex; justify-content: center; gap: 5px; height: 53px; margin-top: -9px; padding: 10px 1px 0 0; border-top: 1px dashed #ddd; background: #fff; }
.actions button { width: 80px; height: 34px; border-radius: 4px; border-bottom: 3px solid #2b6fb4; background: #1f8bf0; color: #fff; font-weight: 500; }
.actions .cancel { border-bottom-color: #848687; background: #b0b0b0; font-weight: 400; }
.scroll { width: 10px; background: linear-gradient(90deg, #d4d4d4, #f2f2f2); }
.thumb { height: 42%; border-radius: 5px; background: linear-gradient(90deg, #949494, #aeacad 40%, #a8a6a7); }

.chat { position: absolute; right: 10px; bottom: 8px; width: 52px; height: 52px; display: grid; place-items: center; border: 6px solid #c9cacb; border-radius: 50%; background: linear-gradient(#3cb98c, #0ba45b); box-shadow: 1px 2px 5px rgba(0, 0, 0, .35); }
.chat svg { width: 22px; height: 22px; }

.taskbar { display: flex; height: 40px; background: #141414; color: #fff; }
.power { width: 40px; display: grid; place-items: center; background: #17262e; }
.power svg { width: 21px; height: 21px; }
.task { display: flex; align-items: center; gap: 13px; margin-left: 10px; padding: 0 11px 0 15px; background: #444; }
.task svg { width: 18px; height: 21px; }
.clock { margin-left: auto; padding: 4px 5px 0 0; line-height: 15px; text-align: center; }
.peek { width: 12px; background: #555; }
</style>
